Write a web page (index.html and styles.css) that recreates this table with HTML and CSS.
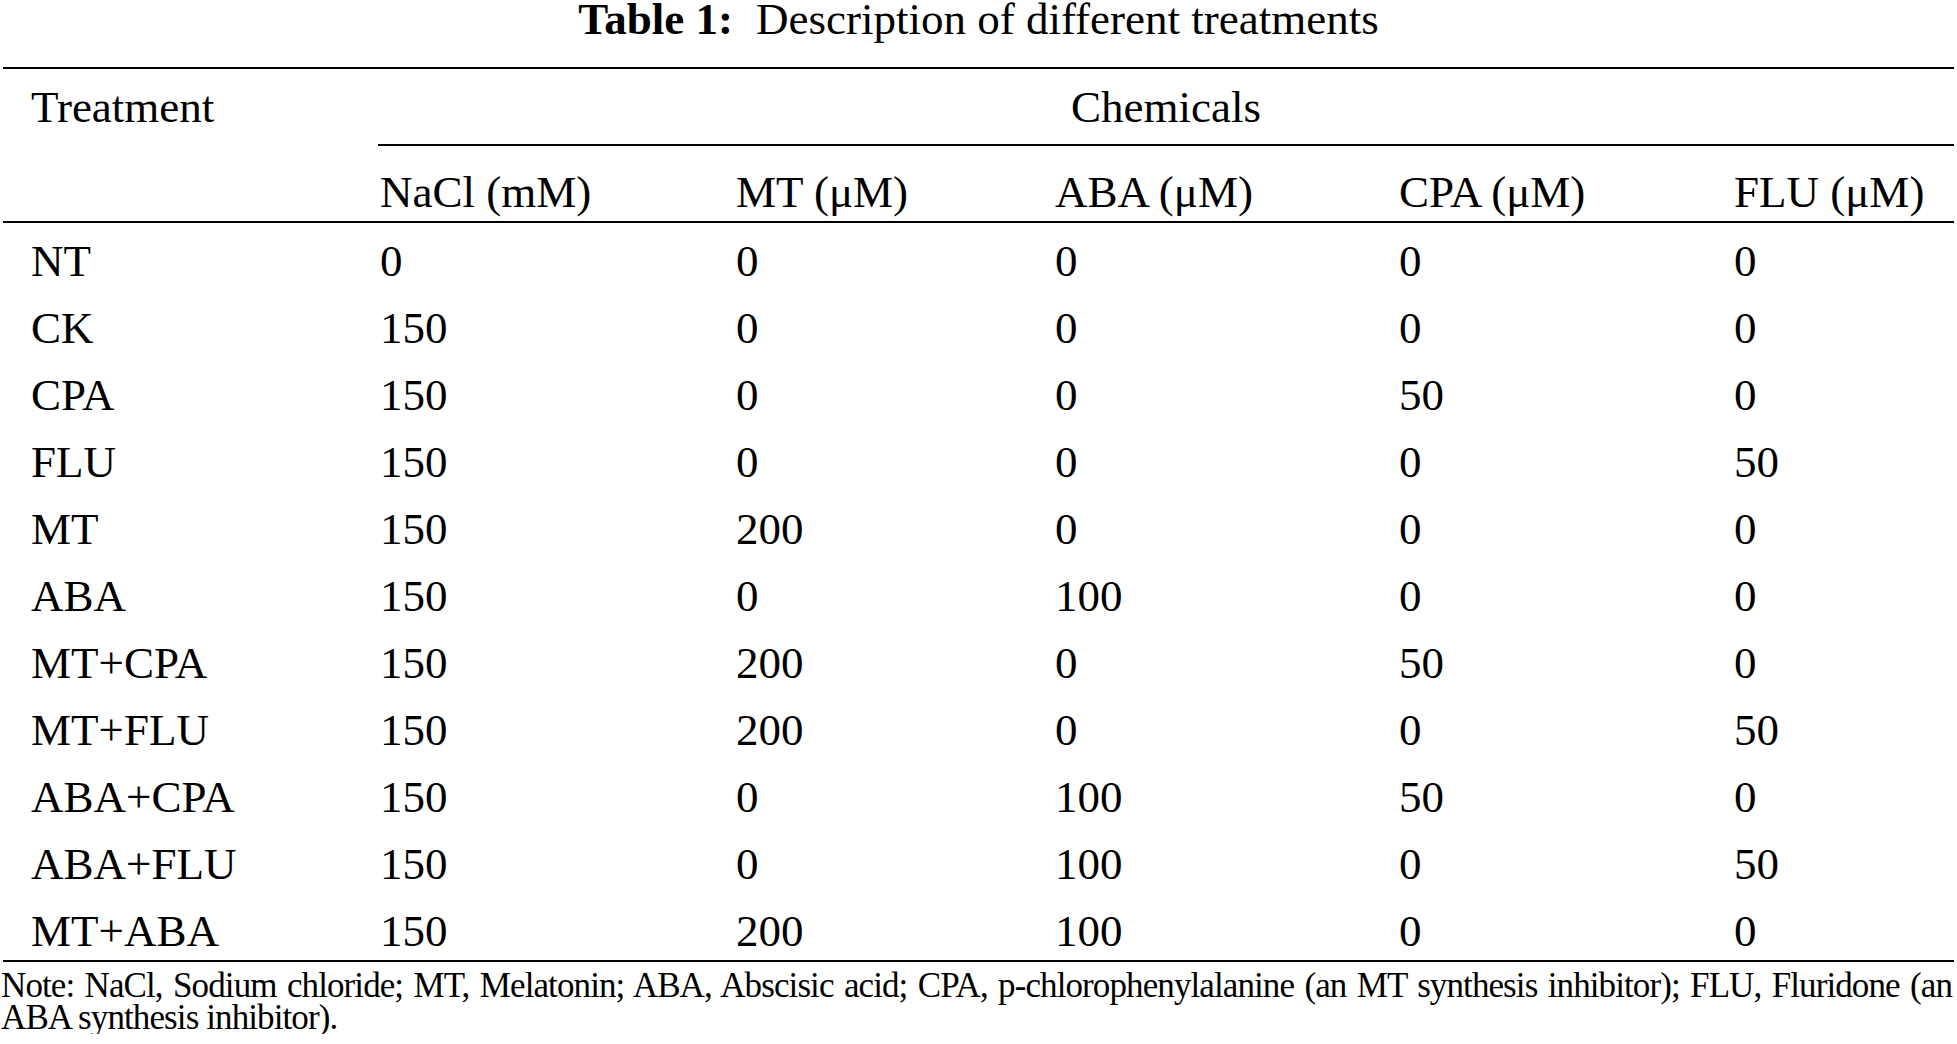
FILE: index.html
```html
<!DOCTYPE html>
<html lang="en">
<head>
<meta charset="utf-8">
<title>Table 1: Description of different treatments</title>
<link rel="stylesheet" href="styles.css">
</head>
<body>
<div class="page">
  <h1 class="caption"><span class="label">Table 1:</span>Description of different treatments</h1>
  <table class="data">
    <colgroup>
      <col class="c1"><col class="c2"><col class="c3"><col class="c4"><col class="c5"><col class="c6">
    </colgroup>
    <thead>
      <tr class="h1">
        <th class="treat" rowspan="2">Treatment</th>
        <th class="chem" colspan="5">Chemicals</th>
      </tr>
      <tr class="h2">
        <th>NaCl (mM)</th>
        <th>MT (μM)</th>
        <th>ABA (μM)</th>
        <th>CPA (μM)</th>
        <th>FLU (μM)</th>
      </tr>
    </thead>
    <tbody>
      <tr><td class="first">NT</td><td>0</td><td>0</td><td>0</td><td>0</td><td>0</td></tr>
      <tr><td class="first">CK</td><td>150</td><td>0</td><td>0</td><td>0</td><td>0</td></tr>
      <tr><td class="first">CPA</td><td>150</td><td>0</td><td>0</td><td>50</td><td>0</td></tr>
      <tr><td class="first">FLU</td><td>150</td><td>0</td><td>0</td><td>0</td><td>50</td></tr>
      <tr><td class="first">MT</td><td>150</td><td>200</td><td>0</td><td>0</td><td>0</td></tr>
      <tr><td class="first">ABA</td><td>150</td><td>0</td><td>100</td><td>0</td><td>0</td></tr>
      <tr><td class="first">MT+CPA</td><td>150</td><td>200</td><td>0</td><td>50</td><td>0</td></tr>
      <tr><td class="first">MT+FLU</td><td>150</td><td>200</td><td>0</td><td>0</td><td>50</td></tr>
      <tr><td class="first">ABA+CPA</td><td>150</td><td>0</td><td>100</td><td>50</td><td>0</td></tr>
      <tr><td class="first">ABA+FLU</td><td>150</td><td>0</td><td>100</td><td>0</td><td>50</td></tr>
      <tr class="last"><td class="first">MT+ABA</td><td>150</td><td>200</td><td>100</td><td>0</td><td>0</td></tr>
    </tbody>
  </table>
  <p class="note">Note: NaCl, Sodium chloride; MT, Melatonin; ABA, Abscisic acid; CPA, p-chlorophenylalanine (an MT synthesis inhibitor); FLU, Fluridone (an ABA synthesis inhibitor).</p>
</div>
</body>
</html>
```

FILE: styles.css
```css
html, body {
  margin: 0;
  padding: 0;
  background: #ffffff;
}

body {
  font-family: "Liberation Serif", "Times New Roman", serif;
  color: #000000;
}

.page {
  width: 1957px;
}

.caption {
  margin: 0 0 29px 0;
  font-size: 45px;
  line-height: 38px;
  font-weight: normal;
  text-align: center;
  white-space: nowrap;
}

.caption .label {
  font-weight: bold;
  margin-right: 23px;
}

.data {
  margin-left: 3px;
  width: 1951px;
  table-layout: fixed;
  border-collapse: separate;
  border-spacing: 0;
  font-size: 45px;
}

.c1 { width: 375px; }
.c2 { width: 356px; }
.c3 { width: 319px; }
.c4 { width: 344px; }
.c5 { width: 335px; }
.c6 { width: 222px; }

.data th,
.data td {
  font-weight: normal;
  text-align: left;
  white-space: nowrap;
  line-height: 57px;
  padding: 10px 0 0 2px;
  vertical-align: top;
}

.data .treat {
  padding-left: 28px;
  border-top: 2px solid #000;
  border-bottom: 2px solid #000;
}

.data .chem {
  text-align: center;
  padding: 10px 0 8px 0;
  border-top: 2px solid #000;
  border-bottom: 2px solid #000;
}

.data .h2 th {
  padding-top: 18px;
  border-bottom: 2px solid #000;
}

.data td.first {
  padding-left: 28px;
}

.data .last td {
  border-bottom: 2px solid #000;
}

.note {
  margin: 8px 0 0 1px;
  width: 1951px;
  font-size: 35px;
  letter-spacing: -0.9px;
  line-height: 32px;
  text-align: justify;
}
```
